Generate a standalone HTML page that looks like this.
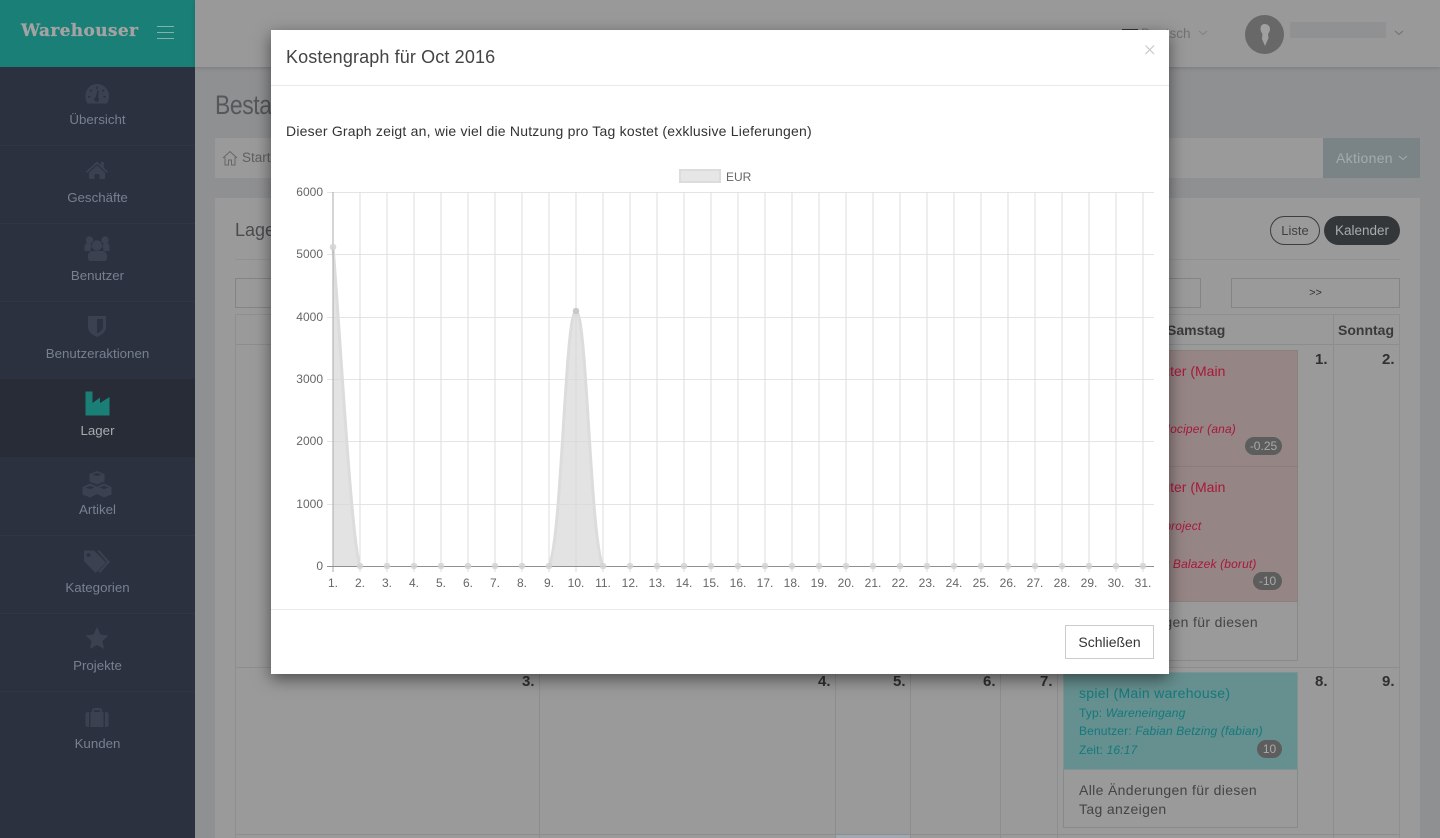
<!DOCTYPE html>
<html><head><meta charset="utf-8"><title>Warehouser</title>
<style>
html,body{margin:0;padding:0;width:1440px;height:838px;overflow:hidden;background:#8f9092;font-family:"Liberation Sans",sans-serif;}
div,span,svg{position:absolute;display:block;box-sizing:border-box}
.t{white-space:nowrap}
.nav{left:0;width:195px;text-align:center;font-size:13.300px;color:#76808f;line-height:18px;white-space:nowrap}
.line{background:#8a8e8e}
.num{font-weight:bold;font-size:15px;color:#303030;white-space:nowrap;line-height:16px}
.ev{font-size:12px;white-space:nowrap;line-height:16px;letter-spacing:.15px}
.badge{background:#5d5d5d;color:#a9a9a9;border-radius:9px;height:18px;line-height:18px;font-size:12px;text-align:center}
</style></head>
<body>
<!-- sidebar -->
<div style="left:0;top:0;width:195px;height:838px;background:#2c3140"></div>
<div style="left:0;top:0;width:195px;height:67px;background:#1a7f76"></div>
<div class="t" style="left:21px;top:20px;font-family:'DejaVu Serif',serif;font-weight:bold;font-size:17px;line-height:22px;color:#a3a3a3;letter-spacing:.35px;-webkit-text-stroke:.3px #a3a3a3">Warehouser</div>
<div style="left:157px;top:26px;width:17px;height:1px;background:#7fb3ac"></div>
<div style="left:157px;top:32px;width:17px;height:1px;background:#7fb3ac"></div>
<div style="left:157px;top:38px;width:17px;height:1px;background:#7fb3ac"></div>
<div style="left:0;top:145px;width:195px;height:1px;background:#30364a"></div>
<div style="left:0;top:223px;width:195px;height:1px;background:#30364a"></div>
<div style="left:0;top:301px;width:195px;height:1px;background:#30364a"></div>
<div style="left:0;top:379px;width:195px;height:78px;background:#272c36"></div>
<div style="left:0;top:535px;width:195px;height:1px;background:#30364a"></div>
<div style="left:0;top:613px;width:195px;height:1px;background:#30364a"></div>
<div style="left:0;top:691px;width:195px;height:1px;background:#30364a"></div>

<svg style="left:0;top:0" width="195" height="838" viewBox="0 0 195 838">
<!-- gauge -->
<path fill="#3b4150" d="M85.500 96c0-7 5-12 11.500-12s12 5 12 12c0 3-.6 5.500-2 7.500H87.500c-1.400-2-2-4.500-2-7.500z"/>
<path fill="#2c3140" d="M96.200 89h1.600v-2.500h-1.600zM91 92l1.200-1-1.500-1.800-1.200 1zM103 92l-1.200-1 1.500-1.800 1.200 1zM88 97.500h2.500V96H88zM103.500 97.500h2.500V96h-2.500z"/>
<path fill="#2c3140" d="M97.500 90.500l1.200 0-.5 7a2.500 2.500 0 1 1-2.500-.4z"/>
<!-- home -->
<path fill="#3b4150" d="M97 161.500l-11 10 1.200 1.300L97 164l9.800 8.800 1.200-1.300-4.200-3.800V162h-3v3z"/>
<path fill="#3b4150" d="M97 165.500l-8 7V179h5.500v-5h5v5H105v-6.500z"/>
<!-- users -->
<circle cx="89.500" cy="240" r="3.700" fill="#3b4150"/><circle cx="105" cy="240" r="3.700" fill="#3b4150"/>
<circle cx="97" cy="245.500" r="5.200" fill="#3b4150"/>
<circle cx="88" cy="246.500" r="3.500" fill="#3b4150"/><circle cx="106" cy="246.500" r="3.500" fill="#3b4150"/>
<path fill="#3b4150" d="M84.500 246h6v5h-6zM103.500 246h6v5h-6z"/>
<path fill="#3b4150" d="M92 251h10c3 0 5 2 5 5v2c0 2-1 3-3 3H91c-2 0-3-1-3-3v-2c0-3 2-5 4-5z"/>
<!-- shield -->
<path fill="#3b4150" d="M88 316h18v11c0 5-4.500 8-9 10-4.500-2-9-5-9-10z"/>
<path fill="#2c3140" d="M97 319h6v8c0 3-3 5-6 6.500z"/>
<!-- factory -->
<path fill="#1a7f76" d="M85.500 391.500h7v11.500l7.500-5.500v5.500l9.500-6v18.500h-24z"/>
<!-- cubes -->
<path fill="#3b4150" d="M97 471l7.500 3v7.500l-7.500 3-7.500-3V474z"/>
<path fill="#3b4150" d="M90 483.500l7 3v7.500l-7 3.500-7.500-3V487z"/>
<path fill="#3b4150" d="M104 483.500l7.500 3.500v7.500l-7.500 3-7-3.500V486.500z"/>
<path fill="#2c3140" d="M97 476l4.500-1.500L97 473l-4.500 1.500zM90 489l4.500-1.500L90 486l-4.500 1.500zM104 489l4.500-1.500L104 486l-4.500 1.500z"/>
<!-- tags -->
<path fill="#3b4150" fill-rule="evenodd" d="M84 550.500h10l12 12-10.500 10.500-11.500-12zM88.500 553a2 2 0 1 0 .01 0z"/>
<path fill="#3b4150" d="M97 550.500h2.500l10.500 11.500-10 11-1.800-1.800 8.800-9.200z"/>
<!-- star -->
<path fill="#3b4150" d="M97 627l3.500 7.500 8 1-6 5.500 1.600 8-7.100-4-7.100 4 1.600-8-6-5.500 8-1z"/>
<!-- briefcase -->
<path fill="#3b4150" fill-rule="evenodd" d="M92 711c0-2 1-3 3-3h4c2 0 3 1 3 3v1.500h-2V711c0-.5-.3-.8-1-.8h-4c-.7 0-1 .3-1 .8v1.500h-2z"/>
<rect x="90.500" y="712" width="13" height="15" fill="#3b4150"/>
<path fill="#3b4150" d="M89 712v15h-1.500c-1 0-2-1-2-2v-11c0-1 1-2 2-2zM105 712v15h1.500c1 0 2-1 2-2v-11c0-1-1-2-2-2z"/>
</svg>

<div class="nav" style="top:111px">Übersicht</div>
<div class="nav" style="top:189px">Geschäfte</div>
<div class="nav" style="top:267px">Benutzer</div>
<div class="nav" style="top:345px">Benutzeraktionen</div>
<div class="nav" style="top:422px;color:#a8acb0">Lager</div>
<div class="nav" style="top:501px">Artikel</div>
<div class="nav" style="top:579px">Kategorien</div>
<div class="nav" style="top:657px">Projekte</div>
<div class="nav" style="top:735px">Kunden</div>

<!-- top bar -->
<div style="left:195px;top:0;width:1245px;height:67px;background:#999;box-shadow:0 1px 4px rgba(0,0,0,.15)"></div>
<div style="left:1122px;top:29px;width:16px;height:11px;background:#333"></div>
<div class="t" style="left:1141px;top:25px;font-size:13.500px;line-height:18px;color:#6f7274">Deutsch</div>
<svg style="left:1198px;top:30px" width="10" height="6"><path d="M1 1l4 3.500L9 1" fill="none" stroke="#7d8285" stroke-width="1"/></svg>
<div style="left:1245px;top:15px;width:39px;height:39px;border-radius:50%;background:#686868"></div>
<svg style="left:1245px;top:15px" width="39" height="39"><path fill="#a0a0a0" d="M19.500 9c3 0 5.500 2 5.500 5 0 2-1 3.500-2 5l.5 4-3.500 8-3-7 .5-5c-1-1.500-2-3-2-5 0-3 1.500-5 4-5z"/></svg>
<div style="left:1290px;top:22px;width:96px;height:16px;background:#8f9192"></div>
<svg style="left:1394px;top:30px" width="10" height="6"><path d="M1 1l4 3.500L9 1" fill="none" stroke="#6a6f72" stroke-width="1"/></svg>

<!-- page -->
<div class="t" style="left:215px;top:87px;font-size:27px;line-height:36px;color:#55575a;letter-spacing:-.5px;transform:scaleX(.85);transform-origin:left">Bestand</div>
<div style="left:215px;top:138px;width:1205px;height:40px;background:#9a9a9a"></div>
<svg style="left:222px;top:150px" width="16" height="16"><path d="M1 8l7-6.500L15 8M3 7v8h3.500v-5h3v5H13V7" fill="none" stroke="#666" stroke-width="1"/></svg>
<div class="t" style="left:242px;top:149px;font-size:13.500px;line-height:18px;color:#5d5f60">Start</div>
<div style="left:1323px;top:138px;width:97px;height:40px;background:#7a8385"></div>
<div class="t" style="left:1336px;top:149px;font-size:14px;line-height:18px;color:#a5abad;letter-spacing:.3px">Aktionen</div>
<svg style="left:1398px;top:155px" width="10" height="6"><path d="M1 1l4 3.500L9 1" fill="none" stroke="#a5abad" stroke-width="1"/></svg>

<div style="left:215px;top:198px;width:1205px;height:640px;background:#9a9a9a"></div>
<div class="t" style="left:235px;top:218px;font-size:18px;line-height:24px;color:#4a4c4d">Lagerbestand</div>
<div style="left:235px;top:259px;width:1165px;height:1px;background:#8f9192"></div>
<div style="left:1270px;top:216px;width:50px;height:29px;border:1px solid #3b3e40;border-radius:15px;text-align:center;line-height:27px;font-size:13px;color:#3f4243">Liste</div>
<div style="left:1324px;top:216px;width:76px;height:29px;background:#34373a;border-radius:15px;text-align:center;line-height:29px;font-size:13.500px;color:#a9abac">Kalender</div>

<div style="left:235px;top:278px;width:966px;height:30px;border:1px solid #828587"></div>
<div style="left:1231px;top:278px;width:169px;height:30px;border:1px solid #828587;text-align:center;line-height:28px;font-size:11px;color:#333">&gt;&gt;</div>

<!-- table -->
<div style="left:235px;top:314px;width:1165px;height:524px;border:1px solid #8c9090;border-bottom:0"></div>
<div style="left:835px;top:835px;width:75px;height:3px;background:#a0a8b2"></div>
<div class="line" style="left:236px;top:344px;width:1163px;height:1px"></div>
<div class="line" style="left:236px;top:667px;width:1163px;height:1px"></div>
<div class="line" style="left:236px;top:834px;width:1163px;height:1px"></div>
<div class="line" style="left:1333px;top:315px;width:1px;height:523px"></div>
<div class="line" style="left:539px;top:667px;width:1px;height:171px"></div>
<div class="line" style="left:835px;top:667px;width:1px;height:171px"></div>
<div class="line" style="left:910px;top:667px;width:1px;height:171px"></div>
<div class="line" style="left:1000px;top:667px;width:1px;height:171px"></div>
<div class="line" style="left:1057px;top:667px;width:1px;height:171px"></div>
<div class="t" style="left:1167px;top:321px;font-weight:bold;font-size:14px;line-height:18px;color:#3a3a3a">Samstag</div>
<div class="t" style="left:1338px;top:321px;font-weight:bold;font-size:14px;line-height:18px;color:#3a3a3a">Sonntag</div>

<div class="num" style="left:1315px;top:352px">1.</div>
<div class="num" style="left:1382px;top:352px">2.</div>
<div class="num" style="left:522px;top:674px">3.</div>
<div class="num" style="left:818px;top:674px">4.</div>
<div class="num" style="left:893px;top:674px">5.</div>
<div class="num" style="left:983px;top:674px">6.</div>
<div class="num" style="left:1040px;top:674px">7.</div>
<div class="num" style="left:1315px;top:674px">8.</div>
<div class="num" style="left:1382px;top:674px">9.</div>

<!-- red events -->
<div style="left:1063px;top:350px;width:235px;height:311px;border:1px solid #878a8a"></div>
<div style="left:1063px;top:350px;width:235px;height:252px;background:#968585;border:1px solid #8b8080"></div>
<div style="left:1063px;top:466px;width:235px;height:1px;background:#8b7c7c"></div>
<div class="t" style="left:1125px;top:362px;font-size:14px;line-height:18px;color:#a8183a">Computer (Main</div>
<div class="t" style="left:1125px;top:478px;font-size:14px;line-height:18px;color:#a8183a">Computer (Main</div>
<div class="ev" style="left:1136px;top:421px;color:#a8183a;font-style:italic">Ana Hociper (ana)</div>
<div class="ev" style="left:1138px;top:518px;color:#a8183a;font-style:italic">Test project</div>
<div class="ev" style="left:1140px;top:556px;color:#a8183a;font-style:italic">Borut Balazek (borut)</div>
<div class="badge" style="left:1245px;top:437px;width:37px">-0.25</div>
<div class="badge" style="left:1253px;top:572px;width:29px">-10</div>
<div class="t" style="left:1080px;top:613px;font-size:14px;line-height:19px;color:#444;letter-spacing:.35px">Alle Änderungen für diesen</div>

<!-- teal event -->
<div style="left:1063px;top:672px;width:235px;height:156px;border:1px solid #878a8a"></div>
<div style="left:1063px;top:672px;width:235px;height:98px;background:#668f8f;border:1px solid #7d9292"></div>
<div class="t" style="left:1079px;top:684px;font-size:14px;line-height:18px;color:#14797c;letter-spacing:.3px">spiel (Main warehouse)</div>
<div class="ev" style="left:1079px;top:705px;color:#14797c">Typ: <i>Wareneingang</i></div>
<div class="ev" style="left:1079px;top:723px;color:#14797c">Benutzer: <i>Fabian Betzing (fabian)</i></div>
<div class="ev" style="left:1079px;top:742px;color:#14797c">Zeit: <i>16:17</i></div>
<div class="badge" style="left:1257px;top:740px;width:25px">10</div>
<div class="t" style="left:1079px;top:781px;font-size:14px;line-height:19px;color:#444;letter-spacing:.35px">Alle Änderungen für diesen</div>
<div class="t" style="left:1079px;top:800px;font-size:14px;line-height:19px;color:#444;letter-spacing:.35px">Tag anzeigen</div>

<!-- modal -->
<div style="left:271px;top:30px;width:898px;height:644px;background:#fff;box-shadow:0 5px 15px rgba(0,0,0,.5)"></div>
<div class="t" style="left:286px;top:45px;font-size:18px;line-height:24px;color:#444;letter-spacing:.13px">Kostengraph für Oct 2016</div>
<svg style="left:1144px;top:44px" width="12" height="12"><path d="M1.500 1.500l8.500 8.500M10 1.500L1.500 10" stroke="#c8c8c8" stroke-width="1.200" fill="none"/></svg>
<div style="left:271px;top:85px;width:898px;height:1px;background:#e9e9e9"></div>
<div class="t" style="left:286px;top:122px;font-size:14px;line-height:18px;color:#333;letter-spacing:.21px">Dieser Graph zeigt an, wie viel die Nutzung pro Tag kostet (exklusive Lieferungen)</div>

<svg style="left:271px;top:160px" width="898" height="440" viewBox="271 160 898 440" font-family="'Liberation Sans',sans-serif" font-size="12" fill="#666">
<rect x="680" y="170" width="40" height="12" fill="#e6e6e6" stroke="#dcdcdc" stroke-width="2"/>
<text x="726" y="181" font-size="12">EUR</text>
<g stroke="#e4e4e4" stroke-width="1" shape-rendering="crispEdges">
<path d="M327 192.500H1154M327 254.500H1154M327 317.500H1154M327 379.500H1154M327 441.500H1154M327 504.500H1154"/>
</g>
<path stroke="#dedede" stroke-width="1" fill="none" d="M360 192V572M387 192V572M414 192V572M441 192V572M468 192V572M495 192V572M522 192V572M549 192V572M576 192V572M603 192V572M630 192V572M657 192V572M684 192V572M711 192V572M738 192V572M765 192V572M792 192V572M819 192V572M846 192V572M873 192V572M900 192V572M927 192V572M954 192V572M981 192V572M1008 192V572M1035 192V572M1062 192V572M1089 192V572M1116 192V572M1143 192V572"/>
<path d="M333 247C340 330 351 540 360 566H333ZM549 566C562 540 565 311 576 311C587 311 590 540 603 566Z" fill="rgba(215,215,215,.7)"/>
<path d="M333 247C340 330 351 540 360 566M549 566C562 540 565 311 576 311C587 311 590 540 603 566" fill="none" stroke="#dcdcdc" stroke-width="3"/>
<path d="M333 192V572" stroke="#a8a8a8" stroke-width="1" shape-rendering="crispEdges"/>
<path d="M327 566.500H1154" stroke="#8f8f8f" stroke-width="1" shape-rendering="crispEdges"/>
<g fill="#d4d4d4" fill-opacity=".85">
<circle cx="333" cy="247" r="3.300"/><circle cx="360" cy="566" r="3.300"/><circle cx="387" cy="566" r="3.300"/><circle cx="414" cy="566" r="3.300"/><circle cx="441" cy="566" r="3.300"/><circle cx="468" cy="566" r="3.300"/><circle cx="495" cy="566" r="3.300"/><circle cx="522" cy="566" r="3.300"/><circle cx="549" cy="566" r="3.300"/><circle cx="576" cy="311" r="3.300" fill="#c4c4c4"/><circle cx="603" cy="566" r="3.300"/><circle cx="630" cy="566" r="3.300"/><circle cx="657" cy="566" r="3.300"/><circle cx="684" cy="566" r="3.300"/><circle cx="711" cy="566" r="3.300"/><circle cx="738" cy="566" r="3.300"/><circle cx="765" cy="566" r="3.300"/><circle cx="792" cy="566" r="3.300"/><circle cx="819" cy="566" r="3.300"/><circle cx="846" cy="566" r="3.300"/><circle cx="873" cy="566" r="3.300"/><circle cx="900" cy="566" r="3.300"/><circle cx="927" cy="566" r="3.300"/><circle cx="954" cy="566" r="3.300"/><circle cx="981" cy="566" r="3.300"/><circle cx="1008" cy="566" r="3.300"/><circle cx="1035" cy="566" r="3.300"/><circle cx="1062" cy="566" r="3.300"/><circle cx="1089" cy="566" r="3.300"/><circle cx="1116" cy="566" r="3.300"/><circle cx="1143" cy="566" r="3.300"/>
</g>
<g text-anchor="end">
<text x="323" y="196">6000</text><text x="323" y="258">5000</text><text x="323" y="321">4000</text><text x="323" y="383">3000</text><text x="323" y="445">2000</text><text x="323" y="508">1000</text><text x="323" y="570">0</text>
</g>
<g text-anchor="middle">
<text x="333" y="587">1.</text><text x="360" y="587">2.</text><text x="387" y="587">3.</text><text x="414" y="587">4.</text><text x="441" y="587">5.</text><text x="468" y="587">6.</text><text x="495" y="587">7.</text><text x="522" y="587">8.</text><text x="549" y="587">9.</text><text x="576" y="587">10.</text><text x="603" y="587">11.</text><text x="630" y="587">12.</text><text x="657" y="587">13.</text><text x="684" y="587">14.</text><text x="711" y="587">15.</text><text x="738" y="587">16.</text><text x="765" y="587">17.</text><text x="792" y="587">18.</text><text x="819" y="587">19.</text><text x="846" y="587">20.</text><text x="873" y="587">21.</text><text x="900" y="587">22.</text><text x="927" y="587">23.</text><text x="954" y="587">24.</text><text x="981" y="587">25.</text><text x="1008" y="587">26.</text><text x="1035" y="587">27.</text><text x="1062" y="587">28.</text><text x="1089" y="587">29.</text><text x="1116" y="587">30.</text><text x="1143" y="587">31.</text>
</g>
</svg>

<div style="left:271px;top:609px;width:898px;height:1px;background:#e9e9e9"></div>
<div style="left:1065px;top:625px;width:89px;height:34px;border:1px solid #ccc;text-align:center;line-height:32px;font-size:14px;color:#333">Schließen</div>
</body></html>
